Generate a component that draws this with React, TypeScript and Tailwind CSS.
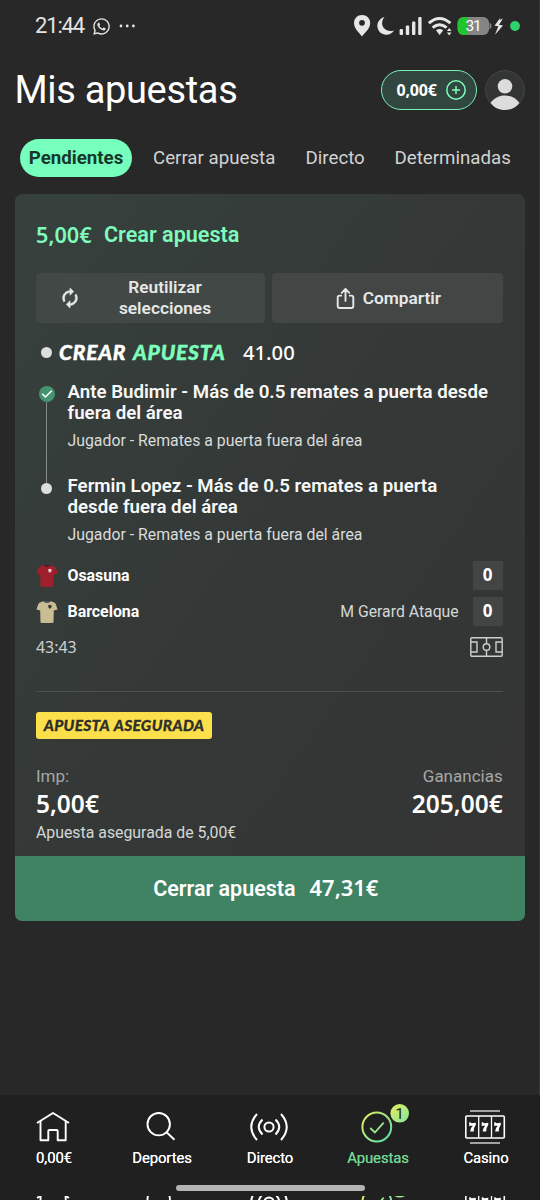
import type { ReactNode } from "react";
import { FaWhatsapp } from "react-icons/fa";

function StatusBar() {
  return (
    <div className="flex h-[52px] shrink-0 items-center pl-[35px] pr-[19px] text-[#e4e4e4]">
      <span className="w-[57px] text-[22px] leading-[26px] tracking-[-1.150px]">21:44</span>
      <FaWhatsapp className="size-[19px]" />
      <svg className="ml-[8px]" width="17" height="4" viewBox="0 0 17 4" fill="currentColor">
        <circle cx="2" cy="2" r="1.400" />
        <circle cx="8.200" cy="2" r="1.400" />
        <circle cx="14.400" cy="2" r="1.400" />
      </svg>
      <svg className="ml-auto" width="168" height="24" viewBox="0 0 168 24" fill="#e6e6e6">
        <path
          fillRule="evenodd"
          d="M10 1c4.600 0 8.200 3.500 8.200 8 0 5.500-5.400 9.800-8.200 13.500C7.200 18.800 2 14.500 2 9c0-4.500 3.500-8 8-8Zm0 4.900a2.900 2.900 0 1 0 0 5.800 2.900 2.900 0 0 0 0-5.800Z"
        />
        <path d="M32.500 3A9 9 0 1 0 42 16.500C32.500 19.500 26.500 10 32.500 3Z" />
        <rect x="47.600" y="15" width="3.400" height="6" rx="1" />
        <rect x="53.800" y="11.500" width="3.400" height="9.500" rx="1" />
        <rect x="60" y="7.500" width="3.400" height="13.500" rx="1" />
        <rect x="66.200" y="3" width="3.400" height="18" rx="1" />
        <g fill="none" stroke="#e6e6e6" strokeWidth="3">
          <path d="M76.800 9.200q10.800-9.400 21.600 0" />
          <path d="M80.600 13.600q7-5.800 14 0" />
        </g>
        <path d="M84 16.200q3.600-2.600 7.200 0L87.600 21Z" />
        <path d="m94.900 17 2.300-3 2.300 3Zm0 1.600h4.600l-2.300 3Z" />
        <clipPath id="battery">
          <rect x="105.600" y="3" width="31.500" height="18" rx="6" />
        </clipPath>
        <g clipPath="url(#battery)">
          <rect x="105" y="3" width="33" height="18" fill="#858585" />
          <rect x="105" y="3" width="11" height="18" fill="#21c52e" />
        </g>
        <path d="M137.500 9q2 0 2 3t-2 3Z" fill="#858585" />
        <text x="121" y="17.300" textAnchor="middle" fontSize="15.500" letterSpacing="-1.300" fontFamily="Roboto, sans-serif" fill="#fff">
          31
        </text>
        <path d="m148.500 3.500-6 8.300 3.800.5-3.300 8.500 8-9.300-4-.7 4-6.300-3.300 1.500Z" />
        <circle cx="163" cy="12" r="4.900" fill="#2fd36c" />
      </svg>
    </div>
  );
}

function Header() {
  return (
    <div className="flex h-[76px] shrink-0 items-center pl-[14.500px] pr-[14px]">
      <h1 className="text-[38px] leading-[44px] tracking-[-0.330px] text-white">Mis apuestas</h1>
      <div className="ml-auto flex h-[40px] w-[96px] items-center rounded-full border-[1.500px] border-[#7af0b6] bg-[#30463e] pl-[14.500px]">
        <span className="w-[50px] pb-[1px] font-['Noto_Sans',sans-serif] text-[16px] font-bold leading-[20px] tracking-[-0.200px] text-white">
          0,00€
        </span>
        <svg width="20" height="20" viewBox="0 0 20 20" fill="none" stroke="#7dffbb" strokeWidth="1.500" className="-ml-[1px]">
          <circle cx="10" cy="10" r="9.200" />
          <path d="M10 6v8M6 10h8" />
        </svg>
      </div>
      <svg className="ml-[8px]" width="40" height="40" viewBox="0 0 40 40">
        <circle cx="20" cy="20" r="19.400" fill="#333434" stroke="#464646" />
        <circle cx="20" cy="16.300" r="7.300" fill="#dcdcdc" />
        <path d="M5.500 33C9 28 14 25.500 20 25.500S31 28 34.500 33C31 37.500 26 40 20 40S9 37.500 5.500 33Z" fill="#dcdcdc" />
      </svg>
    </div>
  );
}

function Tabs() {
  return (
    <div className="mt-[11px] flex h-[38px] shrink-0 items-center pl-[20px] text-[18.700px] leading-[38px] text-[#d2d2d2]">
      <span className="w-[112px] rounded-full bg-[#76ffbd] text-center font-bold text-[#16382a]">Pendientes</span>
      <span className="ml-[21px] w-[152.500px]">Cerrar apuesta</span>
      <span className="w-[89px]">Directo</span>
      <span>Determinadas</span>
    </div>
  );
}

function Selection({ title, won }: { title: ReactNode; won: boolean }) {
  return (
    <div className="flex h-[94px]">
      <div className="flex w-[31.500px] shrink-0 flex-col items-start">
        {won ? (
          <>
            <svg className="mt-[5px] ml-[3px] shrink-0" width="16" height="16" viewBox="0 0 16 16">
              <circle cx="8" cy="8" r="8" fill="#46946f" />
              <path d="m3.200 7.800 3.200 3.200 6.300-6.200" fill="none" stroke="#fff" strokeWidth="1.500" />
            </svg>
            <div className="ml-[10px] w-px grow bg-[#858988]" />
          </>
        ) : (
          <>
            <div className="ml-[10px] h-[8px] w-px bg-[#858988]" />
            <div className="ml-[5px] size-[11px] rounded-full bg-[#dedede]" />
          </>
        )}
      </div>
      <div>
        <div className="whitespace-nowrap pt-[1px] text-[18.700px] font-semibold leading-[21px] text-[#f7f8f7]">{title}</div>
        <div className="mt-[7px] text-[15.830px] leading-[20px] text-[#dadcdb]">Jugador - Remates a puerta fuera del área</div>
      </div>
    </div>
  );
}

function Shirt({ color, crest, collar }: { color: string; crest: string; collar: string }) {
  return (
    <svg width="22" height="24" viewBox="0 0 22 24">
      <path
        d="M7 1.200Q11 3.600 15 1.200l3.200 1.200q1.200.500 1.600 1.800L21.600 9.500l-3.800.900L17.500 22.700q-6.500.600-13 0l-.300-12.300L.400 9.500l1.900-5.300q.4-1.300 1.700-1.800Z"
        fill={color}
      />
      <path d="M7.500 1.200q3.500-1 7 0Q11 5 7.500 1.200Z" fill={collar} />
      <path d="M12.200 5.200q1.700-1 3.400 0v1.500q-.300 1.500-1.700 2.100-1.400-.600-1.700-2.100Z" fill={crest} />
    </svg>
  );
}

function Score() {
  return (
    <div className="flex h-[29px] w-[30px] items-center justify-center bg-[#424544] pb-[2px] font-['Noto_Sans',sans-serif] text-[17px] font-bold leading-[27px] text-white">
      0
    </div>
  );
}

function BetCard() {
  return (
    <div className="ml-[14.500px] mt-[17px] flex h-[727px] w-[510.500px] shrink-0 flex-col overflow-hidden rounded-[7px] bg-linear-to-br from-[#36413d] via-[#343837] via-50% to-[#343434]">
      <div className="flex h-[662px] flex-col pl-[21.500px] pr-[22.300px]">
        <div className="mt-[28px] flex h-[26px] items-center text-[21.600px] font-semibold leading-[26px] text-[#7dfabc]">
          <span className="w-[68px] pb-[1px] font-['Noto_Sans',sans-serif] text-[21.700px]">5,00€</span>
          <span>Crear apuesta</span>
        </div>

        <div className="mt-[25px] flex h-[50px] gap-[7px] text-[17.300px] font-semibold leading-[21px] text-[#e6e8e7]">
          <div className="flex flex-1 items-center rounded-[4px] bg-[#424845]">
            <svg className="ml-[23px]" width="22" height="22" viewBox="0 0 24 24" fill="currentColor" stroke="currentColor" strokeWidth=".7">
              <path d="M12 6v3l4-4-4-4v3c-4.420 0-8 3.580-8 8 0 1.570.460 3.030 1.240 4.260L6.700 14.800c-.450-.830-.700-1.790-.700-2.800 0-3.310 2.690-6 6-6Z" />
              <path d="M18.760 7.740 17.300 9.200c.440.840.700 1.790.700 2.800 0 3.310-2.690 6-6 6v-3l-4 4 4 4v-3c4.420 0 8-3.580 8-8 0-1.570-.460-3.030-1.240-4.260Z" />
            </svg>
            <span className="ml-[29px] w-[110px] text-center">Reutilizar selecciones</span>
          </div>
          <div className="flex flex-1 items-center justify-center gap-[8px] rounded-[4px] bg-[#424644] pl-[2px]">
            <svg width="19" height="23" viewBox="0 0 20 23" fill="none" stroke="currentColor" strokeWidth="2" strokeLinecap="round" strokeLinejoin="round">
              <path d="M10 14V2M6 5.500l4-4 4 4M5.500 8.500H3.800a2 2 0 0 0-2 2v9a2 2 0 0 0 2 2h12.400a2 2 0 0 0 2-2v-9a2 2 0 0 0-2-2h-1.700" />
            </svg>
            <span>Compartir</span>
          </div>
        </div>

        <div className="mt-[15px] flex h-[27px] items-center">
          <div className="ml-[5px] mt-[2px] size-[11px] rounded-full bg-[#dedede]" />
          <span className="ml-[7px] w-[74px] font-[Lato,sans-serif] text-[21px] font-black italic leading-[26px] tracking-[0.750px] text-white [-webkit-text-stroke:0.400px_#fff]">CREAR</span>
          <span className="w-[110px] font-[Lato,sans-serif] text-[21px] font-black italic leading-[26px] tracking-[0.750px] text-[#7dffbb] [-webkit-text-stroke:0.400px_#7dffbb]">APUESTA</span>
          <span className="font-['Noto_Sans',sans-serif] text-[20.200px] font-medium leading-[26px] text-white">41.00</span>
        </div>

        <div className="mt-[16px] h-[180px]">
          <Selection won title={<>Ante Budimir - Más de 0.5 remates a puerta desde<br />fuera del área</>} />
          <Selection won={false} title={<>Fermin Lopez - Más de 0.5 remates a puerta<br />desde fuera del área</>} />
        </div>

        <div className="flex h-[29px] items-center text-[15.900px] font-bold text-white">
          <Shirt color="#9f202c" crest="#e6c7c4" collar="#5b1820" />
          <span className="ml-[9.500px] mr-auto">Osasuna</span>
          <Score />
        </div>
        <div className="mt-[7px] flex h-[29px] items-center text-[15.900px] font-bold text-white">
          <Shirt color="#c9bd94" crest="#3c3a35" collar="#4d5460" />
          <span className="ml-[9.500px] mr-auto">Barcelona</span>
          <span className="mr-[14px] text-[15.800px] font-normal text-[#d5d8d7]">M Gerard Ataque</span>
          <Score />
        </div>
        <div className="mt-[10px] flex h-[22px] items-center justify-between text-[#cdd0cf]">
          <span className="font-['Noto_Sans',sans-serif] text-[15.900px] leading-[22px]">43:43</span>
          <svg width="33" height="20" viewBox="0 0 33 20" fill="none" stroke="#cdcfce" strokeWidth="1.400">
            <rect x=".8" y=".8" width="31.400" height="18.400" rx="1" />
            <path d="M16.500 1v5.700M16.500 13.300V19M1 5h6v10H1M32 5h-6v10h6" />
            <circle cx="16.500" cy="10" r="3.300" />
          </svg>
        </div>
        <div className="mt-[33px] h-px bg-[#4b4f4d]" />

        <div className="mt-[20px] h-[27px] w-[176px] whitespace-nowrap rounded-[3px] bg-[#fbe04c] text-center font-[Lato,sans-serif] text-[15.500px] font-black italic leading-[26px] tracking-[0.300px] text-[#302f2b] [-webkit-text-stroke:0.300px_#302f2b] [word-spacing:1px]">
          APUESTA ASEGURADA
        </div>

        <div className="mt-[26px] flex h-[22px] justify-between text-[17px] leading-[22px] text-[#a5a8a6]">
          <span>Imp:</span>
          <span>Ganancias</span>
        </div>
        <div className="mt-[2px] flex h-[30px] items-center justify-between font-['Noto_Sans',sans-serif] text-[24.500px] font-semibold leading-[30px] text-white">
          <span>5,00€</span>
          <span>205,00€</span>
        </div>
        <div className="mt-[4px] text-[15.850px] leading-[20px] text-[#d5d7d6]">Apuesta asegurada de 5,00€</div>
      </div>

      <div className="flex grow items-center justify-center gap-[14px] bg-[#3f8363] pr-[8px] text-[21.500px] font-semibold leading-[26px] text-white">
        <span>Cerrar apuesta</span>
        <span className="pb-[1px] font-['Noto_Sans',sans-serif] text-[21.900px]">47,31€</span>
      </div>
    </div>
  );
}

function NavIcons({ id, count }: { id: string; count?: number }) {
  const slots = [9.5, 22, 34.5];
  return (
    <div className="grid h-[40px] grid-cols-5 justify-items-center">
      <svg width="40" height="40" viewBox="0 0 40 40" fill="none" stroke="#fff" strokeWidth="1.900" strokeLinejoin="round">
        <path d="M3 16 19 6l16 10" />
        <path d="M6.500 14v19.300h7.800V24q0-1 1-1h7.400q1 0 1 1v9.300h8V14" />
      </svg>
      <svg width="40" height="40" viewBox="0 0 40 40" fill="none" stroke="#fff" strokeWidth="1.900">
        <circle cx="16.700" cy="17.200" r="11.200" />
        <path d="m24.500 25.300 8 7.500" />
      </svg>
      <svg width="40" height="40" viewBox="0 0 40 40" fill="none" stroke="#fff" strokeWidth="2">
        <circle cx="19" cy="20" r="4.600" />
        <path d="M12.500 12.500Q5 20 12.500 27.500M25.500 12.500q7.500 7.500 0 15M7 7q-11.500 13 0 26M31 7q11.500 13 0 26" />
      </svg>
      <svg width="50" height="40" viewBox="0 0 50 40" className="overflow-visible">
        <defs>
          <linearGradient id={`${id}-ring`} x1="0" y1="0" x2="1" y2="1">
            <stop stopColor="#eaf15c" />
            <stop offset="1" stopColor="#54ddb0" />
          </linearGradient>
          <linearGradient id={`${id}-badge`} x1="0" y1="0" x2="1" y2="1">
            <stop stopColor="#e9ee58" />
            <stop offset="1" stopColor="#83e6a0" />
          </linearGradient>
        </defs>
        <circle cx="23.800" cy="20" r="14.400" fill="none" stroke={`url(#${id}-ring)`} strokeWidth="2" />
        <path d="m17.300 21 4.600 4.500 8.800-9.800" fill="none" stroke="#9be98b" strokeWidth="1.800" />
        <circle cx="46.700" cy="6.300" r="9.300" fill={`url(#${id}-badge)`} />
        {count !== undefined && (
          <text x="46.700" y="11.800" textAnchor="middle" fontSize="15.500" fontFamily="Roboto, sans-serif" fill="#1e251d">
            {count}
          </text>
        )}
      </svg>
      <svg width="44" height="40" viewBox="0 0 44 40" fill="none" stroke="#fff" strokeWidth="1.300" className="-ml-[3px]">
        <path d="M7 4h30M7 36h30" stroke="#cdcdcd" strokeWidth="1.600" />
        <rect x="2.800" y="9" width="38.500" height="22" rx="1" strokeWidth="1.600" />
        <path d="M15.700 9v22M28.500 9v22" />
        {slots.map((x) => (
          <path
            key={x}
            d={`M${x - 3.3} 19.300v-4h1l1.600 1 4-.600v2q-2.100 2.700-2.100 6.700h-3.600q.2-3.400 2.700-5.600l-2.600-.100Z`}
            fill="#fff"
            stroke="none"
          />
        ))}
      </svg>
    </div>
  );
}

function BottomNav() {
  return (
    <div className="flex h-[105px] shrink-0 flex-col bg-[#202020]">
      <div className="pt-[12px]">
        <NavIcons id="nav" count={1} />
      </div>
      <div className="mt-[2px] grid grid-cols-5 text-center text-[14.900px] leading-[19px] tracking-[-0.100px] text-white [text-shadow:0_0_0.500px_#fff]">
        <span>0,00€</span>
        <span>Deportes</span>
        <span>Directo</span>
        <span className="text-[#71d694] [text-shadow:0_0_0.500px_#71d694]">Apuestas</span>
        <span>Casino</span>
      </div>
      <div className="mx-auto mt-[17px] h-[6px] w-[189px] shrink-0 rounded-full bg-[#b3b3b3]" />
      <div className="mt-auto h-[4px] overflow-hidden">
        <div className="-mt-[14px]">
          <NavIcons id="next" />
        </div>
      </div>
    </div>
  );
}

export default function App() {
  return (
    <div className="flex h-[1200px] w-[540px] flex-col overflow-hidden bg-[#282828] font-[Roboto,sans-serif]">
      <div className="flex grow flex-col border-r border-[#3a3a3a]">
        <StatusBar />
        <Header />
        <Tabs />
        <BetCard />
      </div>
      <BottomNav />
    </div>
  );
}
